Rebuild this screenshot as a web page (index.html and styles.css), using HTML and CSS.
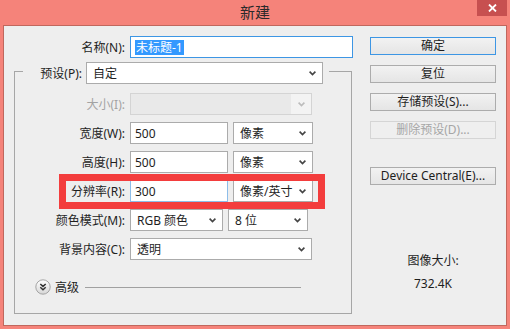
FILE: index.html
```html
<!DOCTYPE html>
<html lang="zh-CN">
<head>
    <meta charset="UTF-8">
    <meta name="viewport" content="width=device-width, initial-scale=1.0">
    <title>新建</title>
    <link rel="stylesheet" href="styles.css">
</head>
<body>
    <div class="window">
        <div class="titlebar">
            <span class="title">新建</span>
            <span class="close">
                <svg width="9" height="8" viewBox="0 0 9 8"><path d="M1 0.5 L8 7.5 M8 0.5 L1 7.5" stroke="#fff" stroke-width="1.8"/></svg>
            </span>
        </div>
        <div class="client">
            <div class="form">
                <div class="row">
                    <label class="label name-label">名称(N):</label>
                    <div class="input name-input"><span class="selected">未标题-1</span></div>
                </div>

                <div class="group">
                    <div class="group-head">
                        <label class="label preset-label">预设(P):</label>
                        <div class="select preset">自定<span class="arrow"><svg width="7" height="5" viewBox="0 0 7 5"><path d="M0.6 0.6 L3.5 3.6 L6.4 0.6" fill="none" stroke="#444" stroke-width="1.6"/></svg></span></div>
                    </div>

                    <div class="rows">
                        <div class="row">
                            <label class="label disabled">大小(I):</label>
                            <div class="select wide off"><span></span><span class="arrow"><svg width="7" height="5" viewBox="0 0 7 5"><path d="M0.6 0.6 L3.5 3.6 L6.4 0.6" fill="none" stroke="#bcbcbc" stroke-width="1.6"/></svg></span></div>
                        </div>
                        <div class="row">
                            <label class="label">宽度(W):</label>
                            <div class="input num">500</div>
                            <div class="select unit">像素<span class="arrow"><svg width="7" height="5" viewBox="0 0 7 5"><path d="M0.6 0.6 L3.5 3.6 L6.4 0.6" fill="none" stroke="#444" stroke-width="1.6"/></svg></span></div>
                        </div>
                        <div class="row">
                            <label class="label">高度(H):</label>
                            <div class="input num">500</div>
                            <div class="select unit">像素<span class="arrow"><svg width="7" height="5" viewBox="0 0 7 5"><path d="M0.6 0.6 L3.5 3.6 L6.4 0.6" fill="none" stroke="#444" stroke-width="1.6"/></svg></span></div>
                        </div>
                        <div class="row">
                            <label class="label">分辨率(R):</label>
                            <div class="input num hover">300</div>
                            <div class="select unit">像素/英寸<span class="arrow"><svg width="7" height="5" viewBox="0 0 7 5"><path d="M0.6 0.6 L3.5 3.6 L6.4 0.6" fill="none" stroke="#444" stroke-width="1.6"/></svg></span></div>
                        </div>
                        <div class="row">
                            <label class="label">颜色模式(M):</label>
                            <div class="select mode">RGB 颜色<span class="arrow"><svg width="7" height="5" viewBox="0 0 7 5"><path d="M0.6 0.6 L3.5 3.6 L6.4 0.6" fill="none" stroke="#444" stroke-width="1.6"/></svg></span></div>
                            <div class="select unit">8 位<span class="arrow"><svg width="7" height="5" viewBox="0 0 7 5"><path d="M0.6 0.6 L3.5 3.6 L6.4 0.6" fill="none" stroke="#444" stroke-width="1.6"/></svg></span></div>
                        </div>
                        <div class="row">
                            <label class="label">背景内容(C):</label>
                            <div class="select wide">透明<span class="arrow"><svg width="7" height="5" viewBox="0 0 7 5"><path d="M0.6 0.6 L3.5 3.6 L6.4 0.6" fill="none" stroke="#444" stroke-width="1.6"/></svg></span></div>
                        </div>
                        <div class="highlight"></div>
                    </div>

                    <div class="advanced">
                        <svg width="16" height="16" viewBox="0 0 16 16">
                            <defs>
                                <linearGradient id="ball" x1="0" y1="0" x2="0" y2="1">
                                    <stop offset="0" stop-color="#ffffff"/>
                                    <stop offset="1" stop-color="#d6d6d6"/>
                                </linearGradient>
                            </defs>
                            <circle cx="8" cy="8" r="7.2" fill="url(#ball)" stroke="#9c9c9c" stroke-width="0.9"/>
                            <path d="M5.3 5 L8 7.4 L10.7 5 M5.3 8.3 L8 10.7 L10.7 8.3" fill="none" stroke="#333" stroke-width="1.5"/>
                        </svg>
                        <span class="adv-text">高级</span>
                        <span class="adv-line"></span>
                    </div>
                </div>
            </div>

            <div class="side">
                <button class="btn default">确定</button>
                <button class="btn">复位</button>
                <button class="btn">存储预设(S)...</button>
                <button class="btn" disabled>删除预设(D)...</button>
                <button class="btn device">Device Central(E)...</button>
                <div class="image-size">
                    <div>图像大小:</div>
                    <div>732.4K</div>
                </div>
            </div>
        </div>
    </div>
</body>
</html>
```

FILE: styles.css
```css
body {
    margin: 0;
    font-family: "Noto Sans", "Noto Sans CJK SC", sans-serif;
    font-size: 12px;
    color: #1e1e1e;
}

.window {
    width: 510px;
    height: 329px;
    box-sizing: border-box;
    padding: 0 3px 3px;
    background: #f5837a;
}

.titlebar {
    height: 25px;
    display: grid;
    grid-template-columns: 1fr auto 1fr;
}

.title {
    grid-column: 2;
    font-size: 15px;
    line-height: 25px;
    color: #2a2a2a;
}

.close {
    grid-column: 3;
    justify-self: end;
    width: 30px;
    height: 16px;
    background: #c75050;
    display: flex;
    align-items: center;
    justify-content: center;
}

.client {
    height: 301px;
    box-sizing: border-box;
    border: 1px solid #c0675d;
    background: #eeeeee;
    padding: 10px 0 0 10px;
    display: flex;
}

.form {
    width: 339px;
}

.row {
    display: flex;
    align-items: center;
    gap: 5px;
    height: 22px;
}

.label {
    width: 110px;
    text-align: right;
    white-space: nowrap;
}

.name-label {
    width: 111px;
}

.label.disabled {
    color: #a3a3a3;
}

.input,
.select {
    height: 22px;
    box-sizing: border-box;
    background: #fff;
    border: 1px solid #ababab;
    display: flex;
    align-items: center;
    white-space: nowrap;
}

.input {
    padding-left: 4px;
}

.name-input {
    width: 223px;
    border-color: #3d96e4;
}

.selected {
    background: #3399ff;
    color: #fff;
    padding: 0 1px;
    line-height: 15px;
}

.num {
    width: 98px;
}

.input.hover {
    border-color: #8dbde9;
}

.select {
    padding: 0 6px 0 6px;
    justify-content: space-between;
}

.arrow {
    display: flex;
}

.unit {
    width: 80px;
}

.mode {
    width: 93px;
}

.wide {
    width: 182px;
}

.select.off {
    background: linear-gradient(to right, #e9e9e9 0, #e9e9e9 160px, #f3f3f3 160px);
    border-color: #d4d4d4;
}

.group {
    margin-top: 13px;
    width: 338px;
    box-sizing: border-box;
    border: 1px solid #a6a6a6;
    padding-bottom: 18px;
}

.group-head {
    display: flex;
    align-items: center;
    gap: 4px;
    width: fit-content;
    margin: -10px 0 0 8px;
    padding: 0 6px 0 13px;
    background: #eeeeee;
}

.preset-label {
    width: 46px;
}

.preset {
    width: 237px;
}

.rows {
    position: relative;
    margin-top: 9px;
    display: grid;
    gap: 7px;
}

.highlight {
    position: absolute;
    left: 44px;
    top: 81px;
    width: 266px;
    height: 35px;
    box-sizing: border-box;
    border: 7px solid #f33d3d;
}

.advanced {
    display: flex;
    align-items: center;
    margin: 19px 0 0 20px;
    height: 16px;
}

.adv-text {
    margin-left: 4px;
}

.adv-line {
    width: 216px;
    margin-left: 6px;
    border-top: 1px solid #a0a0a0;
}

.side {
    width: 126px;
    margin-left: 17px;
    padding-top: 1px;
    display: flex;
    flex-direction: column;
    gap: 10px;
}

.btn {
    height: 18px;
    padding: 0;
    font: inherit;
    color: #1e1e1e;
    border: 1px solid #acacac;
    background: linear-gradient(#f2f2f2, #e5e5e5);
    line-height: 16px;
}

.btn.default {
    border-color: #3d96e4;
}

.btn:disabled {
    color: #a6a6a6;
    border-color: #d5d5d5;
    background: #efefef;
}

.btn.device {
    margin-top: 18px;
}

.image-size {
    margin-top: 54px;
    text-align: center;
    line-height: 23px;
}
```
